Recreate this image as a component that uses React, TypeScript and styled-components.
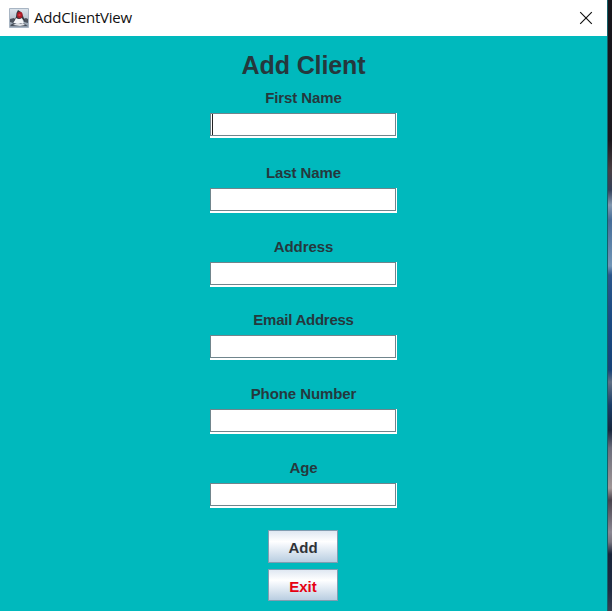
import React from "react";
import styled, { createGlobalStyle } from "styled-components";

const GlobalStyle = createGlobalStyle`
  * { box-sizing: border-box; }
  body { margin: 0; overflow: hidden; background: #15141a; }
`;

const Desktop = styled.div`
  display: flex;
  width: 612px;
  height: 611px;
  overflow: hidden;
`;

const Window = styled.main`
  width: 608px;
  height: 611px;
  border-right: 1px solid #12616a;
  background: #00b9bd;
`;

const Wallpaper = styled.div`
  width: 4px;
  background: linear-gradient(
    #17151b 0, #1b171c 140px, #4a3f43 170px, #34405a 190px,
    #8298b0 205px, #466c98 220px, #7195b7 266px, #2b568c 275px,
    #1b4a83 320px, #174278 370px, #607085 382px, #1b3d68 405px,
    #17263d 430px, #6b6d7b 448px, #a09696 488px, #49424c 500px,
    #8b8792 532px, #77747e 542px, #19243a 554px, #202b42 590px, #3a3f50 611px
  );
`;

const TitleBar = styled.header`
  display: flex;
  align-items: center;
  height: 36px;
  padding: 0 14px 0 9px;
  background: #fff;
`;

const WindowTitle = styled.span`
  flex: 1;
  margin-left: 5px;
  padding-bottom: 2px;
  color: #111;
  font: 15px/20px "Open Sans", "Noto Sans", sans-serif;
  letter-spacing: -0.2px;
`;

const CloseButton = styled.button`
  display: flex;
  padding: 0;
  border: 0;
  background: none;
`;

const Form = styled.form`
  display: flex;
  flex-direction: column;
  align-items: center;
  padding-top: 14px;
  color: #25383d;
  font-family: "Liberation Sans", Arial, sans-serif;
  font-weight: bold;
`;

const Heading = styled.h1`
  height: 30px;
  margin: 0;
  font-size: 25px;
  line-height: 30px;
  letter-spacing: -0.12px;
`;

const Field = styled.label<{ $gap: number; $spacing?: number }>`
  display: flex;
  flex-direction: column;
  align-items: center;
  gap: 7px;
  margin-top: ${({ $gap }) => $gap}px;
  font-size: 15px;
  line-height: 17px;
  letter-spacing: ${({ $spacing = -0.08 }) => $spacing}px;
`;

const InputFrame = styled.span`
  display: flex;
  width: 187px;
  height: 25px;
  padding: 0 1px 2px 0;
  background: #fff;
`;

const Input = styled.input`
  width: 186px;
  height: 23px;
  padding: 0 1px;
  border: 1px solid #70858c;
  border-radius: 0;
  outline: 0;
  background: #fff;
  caret-color: transparent;
  font: inherit;
`;

const Caret = styled.i`
  flex: none;
  width: 1px;
  height: 21px;
  margin: 1px 0 0 -184px;
  background: #222;
`;

const Actions = styled.div`
  display: flex;
  flex-direction: column;
  gap: 6px;
  margin: 22px 1px 0 0;
`;

const Button = styled.button<{ $danger?: boolean }>`
  width: 70px;
  height: ${({ $danger }) => ($danger ? 32 : 33)}px;
  padding: 2px 0 0;
  border: 1px solid #829db1;
  border-radius: 0;
  background: linear-gradient(#e0e8f2 0, #fff 34%, #f5f8fc 43%, #b9cee1 100%);
  color: ${({ $danger }) => ($danger ? "#e60012" : "#303338")};
  font: bold 15px/17px "Liberation Sans", Arial, sans-serif;
`;

const fields = [
  { name: "First Name", gap: 9 },
  { name: "Last Name", gap: 26 },
  { name: "Address", gap: 25 },
  { name: "Email Address", gap: 24, spacing: -0.25 },
  { name: "Phone Number", gap: 25 },
  { name: "Age", gap: 25 },
];

function JavaIcon() {
  return (
    <svg width="20" height="20" viewBox="0 0 20 20" aria-hidden="true">
      <defs>
        <linearGradient id="tile" x1="0" y1="0" x2="0" y2="1">
          <stop offset="0" stopColor="#dce4ec" />
          <stop offset="0.55" stopColor="#b9c2cc" />
          <stop offset="1" stopColor="#8593a2" />
        </linearGradient>
      </defs>
      <path d="M.5.5h19v19H.5z" fill="url(#tile)" stroke="#a8b5c3" />
      <path d="M1 11l4-1 2 2-3 3-3-1zM14 11l3-1 2 1v4l-4-1z" fill="#4b535d" />
      <path d="M9 2L7.5 5 7 9l-2 4 3-2h5l3 2-2-5-2-4z" fill="#33363d" />
      <path d="M7 10q3 2 6 0l2 6-3-1-2 2-3-2-3 1z" fill="#f3f5f7" />
      <path d="M1.5 17l3-2 4 1 6-1 4 3h-17z" fill="#444c57" />
      <path d="M4 17l4-2 3 1 3-1 2 2-5 1z" fill="#e0e3e7" />
      <ellipse cx="10.8" cy="7" rx="2.8" ry="3.3" fill="#a91d28" />
      <ellipse cx="10.5" cy="7" rx="1.1" ry="1.2" fill="#df3b42" />
    </svg>
  );
}

export default function App() {
  return (
    <Desktop>
      <GlobalStyle />
      <Window>
        <TitleBar>
          <JavaIcon />
          <WindowTitle>AddClientView</WindowTitle>
          <CloseButton type="button" aria-label="Close">
            <svg width="14" height="14" viewBox="0 0 14 14">
              <path d="M1.2 1.2l11.6 11.6M12.8 1.2L1.2 12.8" stroke="#111" strokeWidth="1.15" />
            </svg>
          </CloseButton>
        </TitleBar>
        <Form onSubmit={(event) => event.preventDefault()}>
          <Heading>Add Client</Heading>
          {fields.map(({ name, gap, spacing }, index) => (
            <Field key={name} $gap={gap} $spacing={spacing}>
              {name}
              <InputFrame>
                <Input type="text" />
                {index === 0 && <Caret />}
              </InputFrame>
            </Field>
          ))}
          <Actions>
            <Button type="submit">Add</Button>
            <Button type="button" $danger>Exit</Button>
          </Actions>
        </Form>
      </Window>
      <Wallpaper />
    </Desktop>
  );
}
